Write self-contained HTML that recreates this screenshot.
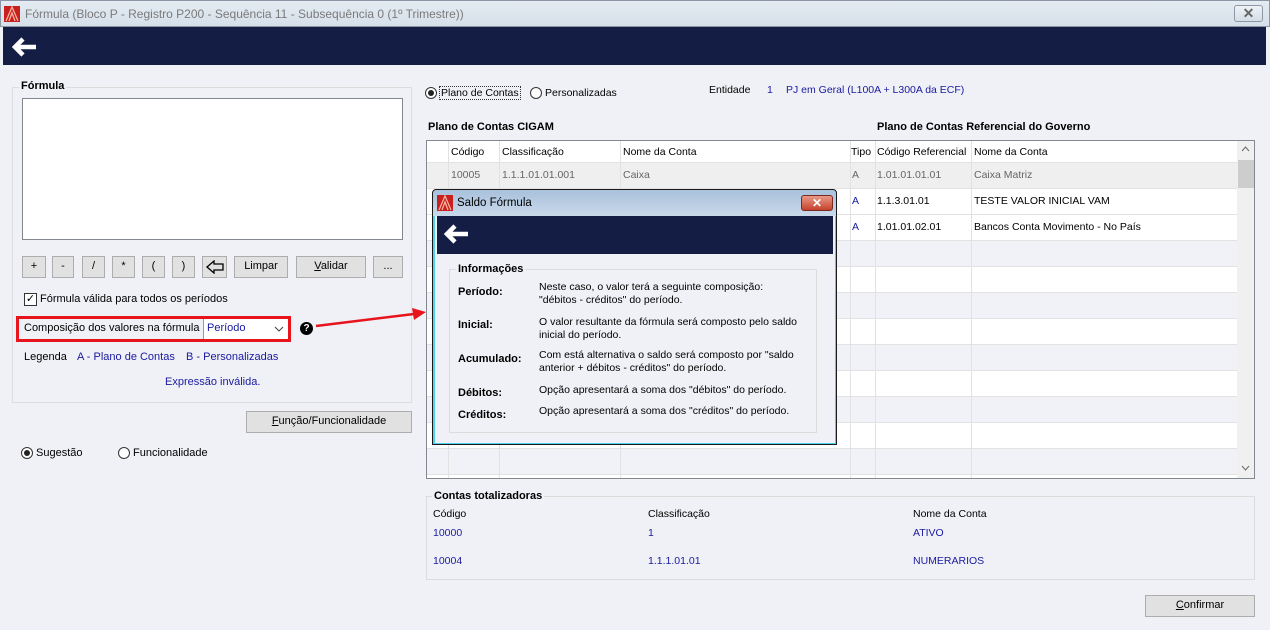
<!DOCTYPE html>
<html><head><meta charset="utf-8"><style>
*{margin:0;padding:0;box-sizing:border-box}
body{width:1270px;height:630px;background:#f0f1f7;font-family:"Liberation Sans",sans-serif;font-size:11px;color:#000;position:relative;overflow:hidden}
.a{position:absolute;white-space:nowrap}
.r{font-size:10.5px}
.btn{position:absolute;background:#e1e1e1;border:1px solid #adadad;text-align:center;line-height:19px;font-size:11px}
.blue{color:#1a1aa0}
.gb{position:absolute;border:1px solid #dcdcdc}
.rad{position:absolute;width:12px;height:12px;border:1px solid #333;border-radius:50%;background:#fff}
.rad.on::after{content:"";position:absolute;left:2px;top:2px;width:6px;height:6px;border-radius:50%;background:#222}
</style></head><body>
<div class="a" style="left:0;top:0;width:1270px;height:27px;background:linear-gradient(#e4ebf2,#d6e0ea);border:1px solid #8a96a4"></div>
<svg class="a" style="left:4px;top:6px" width="16" height="16"><rect width="16" height="16" fill="#c8201c"/><path d="M2 15 L8 1 L14 15 M5 15 L8 7 L11 15" stroke="#f7b0a0" stroke-width="1.3" fill="none"/></svg>
<div class="a" style="left:25px;top:7px;font-size:12px;color:#7a7a7a">Fórmula (Bloco P - Registro P200 - Sequência 11 - Subsequência 0 (1º Trimestre))</div>
<div class="a" style="left:1234px;top:5px;width:29px;height:17px;border:1px solid #8d98a6;border-radius:3px;background:linear-gradient(#eef2f6,#d5dde6);text-align:center;line-height:15px;font-weight:bold;color:#666;font-size:14px">✕</div>
<div class="a" style="left:3px;top:27px;width:1263px;height:38px;background:#141e44"></div>
<svg class="a" style="left:10px;top:36px" width="28" height="22"><path d="M26 11 H6 M13 3 L5 11 L13 19" stroke="#fff" stroke-width="4.5" fill="none"/></svg>

<div class="gb" style="left:12px;top:87px;width:400px;height:316px"></div>
<div class="a" style="left:19px;top:80px;background:#f0f1f7;padding:0 2px;font-weight:bold">Fórmula</div>
<div class="a" style="left:22px;top:98px;width:381px;height:142px;background:#fff;border:1px solid #828790"></div>
<div class="btn" style="left:22px;top:256px;width:24px;height:22px">+</div>
<div class="btn" style="left:52px;top:256px;width:22px;height:22px">-</div>
<div class="btn" style="left:82px;top:256px;width:23px;height:22px">/</div>
<div class="btn" style="left:112px;top:256px;width:23px;height:22px">*</div>
<div class="btn" style="left:142px;top:256px;width:23px;height:22px">(</div>
<div class="btn" style="left:172px;top:256px;width:23px;height:22px">)</div>
<div class="btn" style="left:202px;top:256px;width:25px;height:22px"><svg width="20" height="14" style="margin-top:3px"><path d="M18 4 H9 V1 L2 7 L9 13 V10 H18 Z" stroke="#000" stroke-width="1.3" fill="none"/></svg></div>
<div class="btn" style="left:234px;top:256px;width:54px;height:22px">Limpar</div>
<div class="btn" style="left:296px;top:256px;width:70px;height:22px"><u>V</u>alidar</div>
<div class="btn" style="left:373px;top:256px;width:30px;height:22px">...</div>
<div class="a" style="left:24px;top:293px;width:13px;height:13px;border:1px solid #333;background:#fff;font-size:11px;line-height:11px;text-align:center">✓</div>
<div class="a" style="left:40px;top:293px">Fórmula válida para todos os períodos</div>
<div class="a" style="left:16px;top:316px;width:275px;height:26px;border:3px solid #e8141c;background:#f0f1f7"></div>
<div class="a" style="left:203px;top:319px;width:85px;height:20px;background:#fff;border-left:1px solid #999"></div>
<div class="a" style="left:24px;top:322px">Composição dos valores na fórmula</div>
<div class="a blue" style="left:207px;top:322px">Período</div>
<svg class="a" style="left:274px;top:326px" width="10" height="6"><path d="M1 1 L5 5 L9 1" stroke="#444" fill="none"/></svg>
<div class="a" style="left:300px;top:322px;width:13px;height:13px;border-radius:50%;background:#000;color:#fff;font-size:10px;font-weight:bold;text-align:center;line-height:13px">?</div>
<svg class="a" style="left:314px;top:305px" width="115" height="25"><path d="M2 21 L100 9" stroke="#e8141c" stroke-width="2.5"/><path d="M112 7 L98 3 L100 15 Z" fill="#e8141c"/></svg>
<div class="a" style="left:24px;top:351px">Legenda</div>
<div class="a blue" style="left:77px;top:351px">A - Plano de Contas</div>
<div class="a blue" style="left:186px;top:351px">B - Personalizadas</div>
<div class="a blue" style="left:165px;top:376px">Expressão inválida.</div>
<div class="btn" style="left:246px;top:411px;width:166px;height:22px"><u>F</u>unção/Funcionalidade</div>
<div class="rad on" style="left:21px;top:447px"></div><div class="a" style="left:36px;top:447px">Sugestão</div>
<div class="rad" style="left:118px;top:447px"></div><div class="a" style="left:133px;top:447px">Funcionalidade</div>

<div class="rad on" style="left:425px;top:87px"></div><div class="a r" style="left:439px;top:86px;border:1px dotted #333;padding:0 1px">Plano de Contas</div>
<div class="rad" style="left:530px;top:87px"></div><div class="a r" style="left:545px;top:87px">Personalizadas</div>
<div class="a r" style="left:709px;top:84px">Entidade</div>
<div class="a blue r" style="left:767px;top:84px">1</div>
<div class="a blue r" style="left:786px;top:84px">PJ em Geral (L100A + L300A da ECF)</div>
<div class="a" style="left:428px;top:121px;font-weight:bold">Plano de Contas CIGAM</div>
<div class="a" style="left:877px;top:121px;font-weight:bold">Plano de Contas Referencial do Governo</div>

<div class="a r" style="left:426px;top:140px;width:829px;height:339px;border:1px solid #828790;background:#fff;overflow:hidden">
<svg width="829" height="339" style="position:absolute;left:0;top:0">
<rect x="0" y="21" width="810" height="26" fill="#efefef"/>
<g fill="#f1f2f7"><rect x="0" y="99" width="810" height="26"/><rect x="0" y="151" width="810" height="26"/><rect x="0" y="203" width="810" height="26"/><rect x="0" y="255" width="810" height="26"/><rect x="0" y="307" width="810" height="26"/></g>
<g stroke="#e2e2e2"><path d="M0 21.5H810M0 47.5H810M0 73.5H810M0 99.5H810M0 125.5H810M0 151.5H810M0 177.5H810M0 203.5H810M0 229.5H810M0 255.5H810M0 281.5H810M0 307.5H810M0 333.5H810"/>
<path d="M21.5 0V339M72.5 0V339M193.5 0V339M423.5 0V339M448.5 0V339M544.5 0V339"/></g>
<rect x="810" y="0" width="19" height="339" fill="#f0f0f0"/><rect x="811" y="19" width="16" height="28" fill="#cdcdcd"/>
<path d="M815 10 L818.5 6 L822 10" stroke="#666" fill="none"/><path d="M815 325 L818.5 329 L822 325" stroke="#666" fill="none"/>
</svg>
<div class="a" style="left:24px;top:5px">Código</div><div class="a" style="left:75px;top:5px">Classificação</div><div class="a" style="left:196px;top:5px">Nome da Conta</div>
<div class="a" style="left:424px;top:5px">Tipo</div><div class="a" style="left:450px;top:5px">Código Referencial</div><div class="a" style="left:547px;top:5px">Nome da Conta</div>
<div class="a" style="left:24px;top:28px;color:#666">10005</div><div class="a" style="left:75px;top:28px;color:#666">1.1.1.01.01.001</div><div class="a" style="left:196px;top:28px;color:#666">Caixa</div>
<div class="a" style="left:425px;top:28px;color:#666">A</div><div class="a" style="left:450px;top:28px;color:#666">1.01.01.01.01</div><div class="a" style="left:547px;top:28px;color:#666">Caixa Matriz</div>
<div class="a blue" style="left:425px;top:54px">A</div><div class="a" style="left:450px;top:54px">1.1.3.01.01</div><div class="a" style="left:547px;top:54px">TESTE VALOR INICIAL VAM</div>
<div class="a blue" style="left:425px;top:80px">A</div><div class="a" style="left:450px;top:80px">1.01.01.02.01</div><div class="a" style="left:547px;top:80px">Bancos Conta Movimento - No País</div>
</div>

<div class="a" style="left:432px;top:189px;width:405px;height:256px;border:1px solid #1a1a1a;border-radius:4px 4px 0 0;background:linear-gradient(#a9c1dc,#c8d9ea 26px,#4fd0ef 26px)"></div>
<div class="a" style="left:435px;top:216px;width:400px;height:227px;background:#f0f1f7"></div>
<svg class="a" style="left:437px;top:195px" width="16" height="16"><rect width="16" height="16" fill="#c8201c"/><path d="M2 15 L8 1 L14 15 M5 15 L8 7 L11 15" stroke="#f7b0a0" stroke-width="1.3" fill="none"/></svg>
<div class="a" style="left:457px;top:197px;font-size:11.5px">Saldo Fórmula</div>
<div class="a" style="left:801px;top:195px;width:32px;height:16px;border:1px solid #7a2a20;border-radius:3px;background:linear-gradient(#e99a88,#c4422d);color:#fff;font-weight:bold;text-align:center;line-height:14px;font-size:12px">✕</div>
<div class="a" style="left:437px;top:216px;width:396px;height:38px;background:#141e44"></div>
<svg class="a" style="left:442px;top:223px" width="28" height="22"><path d="M26 11 H6 M13 3 L5 11 L13 19" stroke="#fff" stroke-width="4.5" fill="none"/></svg>
<div class="gb" style="left:449px;top:269px;width:368px;height:164px"></div>
<div class="a" style="left:456px;top:263px;background:#f0f1f7;padding:0 2px;font-weight:bold">Informações</div>
<div class="a" style="left:458px;top:286px;font-weight:bold">Período:</div>
<div class="a" style="left:539px;top:281px;font-size:10.5px;line-height:13px">Neste caso, o valor terá a seguinte composição:<br>"débitos - créditos" do período.</div>
<div class="a" style="left:458px;top:319px;font-weight:bold">Inicial:</div>
<div class="a" style="left:539px;top:316px;font-size:10.5px;line-height:13px">O valor resultante da fórmula será composto pelo saldo<br>inicial do período.</div>
<div class="a" style="left:458px;top:353px;font-weight:bold">Acumulado:</div>
<div class="a" style="left:539px;top:349px;font-size:10.5px;line-height:13px">Com está alternativa o saldo será composto por "saldo<br>anterior + débitos - créditos" do período.</div>
<div class="a" style="left:458px;top:387px;font-weight:bold">Débitos:</div>
<div class="a" style="left:539px;top:384px;font-size:10.5px">Opção apresentará a soma dos "débitos" do período.</div>
<div class="a" style="left:458px;top:409px;font-weight:bold">Créditos:</div>
<div class="a" style="left:539px;top:405px;font-size:10.5px">Opção apresentará a soma dos "créditos" do período.</div>

<div class="gb" style="left:426px;top:496px;width:829px;height:84px"></div>
<div class="a" style="left:432px;top:490px;background:#f0f1f7;padding:0 2px;font-weight:bold">Contas totalizadoras</div>
<div class="a r" style="left:433px;top:508px">Código</div><div class="a r" style="left:648px;top:508px">Classificação</div><div class="a r" style="left:913px;top:508px">Nome da Conta</div>
<div class="a blue r" style="left:433px;top:527px">10000</div><div class="a blue r" style="left:648px;top:527px">1</div><div class="a blue r" style="left:913px;top:527px">ATIVO</div>
<div class="a blue r" style="left:433px;top:555px">10004</div><div class="a blue r" style="left:648px;top:555px">1.1.1.01.01</div><div class="a blue r" style="left:913px;top:555px">NUMERARIOS</div>
<div class="btn" style="left:1145px;top:595px;width:110px;height:22px"><u>C</u>onfirmar</div>
</body></html>
